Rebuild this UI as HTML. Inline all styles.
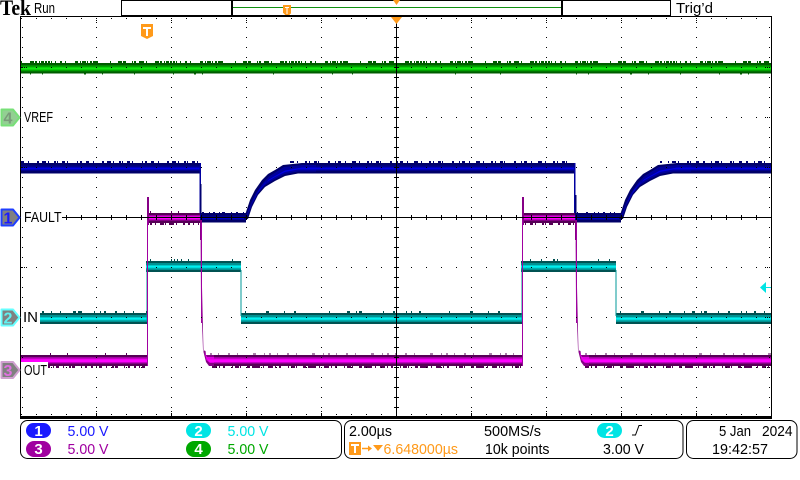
<!DOCTYPE html>
<html><head><meta charset="utf-8"><title>Tek</title>
<style>html,body{margin:0;padding:0;background:#fff}svg{display:block}text{font-family:"Liberation Sans",sans-serif;font-size:15px;fill:#000}</style></head>
<body>
<svg width="800" height="480" viewBox="0 0 800 480" xmlns="http://www.w3.org/2000/svg">
<defs>
<linearGradient id="gG" x1="0" y1="0" x2="0" y2="1"><stop offset=".2" stop-color="#005c00"/><stop offset=".2" stop-color="#008a00"/><stop offset=".35" stop-color="#008a00"/><stop offset=".35" stop-color="#00b800"/><stop offset=".45" stop-color="#00b800"/><stop offset=".45" stop-color="#10e810"/><stop offset=".6" stop-color="#10e810"/><stop offset=".6" stop-color="#00b800"/><stop offset=".7" stop-color="#00b800"/><stop offset=".7" stop-color="#008a00"/><stop offset=".8" stop-color="#008a00"/><stop offset=".8" stop-color="#005c00"/></linearGradient>
<linearGradient id="gC" x1="0" y1="0" x2="0" y2="1"><stop offset=".2" stop-color="#005252"/><stop offset=".2" stop-color="#009090"/><stop offset=".35" stop-color="#009090"/><stop offset=".35" stop-color="#00c8c8"/><stop offset=".45" stop-color="#00c8c8"/><stop offset=".45" stop-color="#00f0f0"/><stop offset=".6" stop-color="#00f0f0"/><stop offset=".6" stop-color="#00c8c8"/><stop offset=".7" stop-color="#00c8c8"/><stop offset=".7" stop-color="#009090"/><stop offset=".8" stop-color="#009090"/><stop offset=".8" stop-color="#005252"/></linearGradient>
<linearGradient id="gM" x1="0" y1="0" x2="0" y2="1"><stop offset=".18" stop-color="#560056"/><stop offset=".18" stop-color="#a000a0"/><stop offset=".32" stop-color="#a000a0"/><stop offset=".32" stop-color="#e000e0"/><stop offset=".4" stop-color="#e000e0"/><stop offset=".4" stop-color="#ff00ff"/><stop offset=".62" stop-color="#ff00ff"/><stop offset=".62" stop-color="#c000c0"/><stop offset=".72" stop-color="#c000c0"/><stop offset=".72" stop-color="#860086"/><stop offset=".82" stop-color="#860086"/><stop offset=".82" stop-color="#560056"/></linearGradient>
<linearGradient id="gB" x1="0" y1="0" x2="0" y2="1"><stop offset=".22" stop-color="#000068"/><stop offset=".22" stop-color="#00008c"/><stop offset=".36" stop-color="#00008c"/><stop offset=".36" stop-color="#0000b8"/><stop offset=".46" stop-color="#0000b8"/><stop offset=".46" stop-color="#0000e4"/><stop offset=".58" stop-color="#0000e4"/><stop offset=".58" stop-color="#0000b8"/><stop offset=".68" stop-color="#0000b8"/><stop offset=".68" stop-color="#00008c"/><stop offset=".78" stop-color="#00008c"/><stop offset=".78" stop-color="#000068"/></linearGradient>
<linearGradient id="gL" x1="0" y1="0" x2="0" y2="1"><stop offset=".25" stop-color="#000068"/><stop offset=".25" stop-color="#00008c"/><stop offset=".4" stop-color="#00008c"/><stop offset=".4" stop-color="#0000c8"/><stop offset=".62" stop-color="#0000c8"/><stop offset=".62" stop-color="#00008c"/><stop offset=".75" stop-color="#00008c"/><stop offset=".75" stop-color="#000068"/></linearGradient>
<g id="rise">
<path d="M245 215L250 200 255 190 262 180 268 174 275 170 283 165 302 163H316V173.500H298L285 176 275 181 265 187 258 195 252 207 248 219 244 219Z" fill="#000068"/>
<path d="M246 216L251 203 256 193 263 183 269 176.500 276 172 284 167 302 165H316V171.500H298L285 174 275 179 265 185 258 193 252 204 247.500 216Z" fill="#00009c"/>
<path d="M248 213L252 204 257 194 263 186 269 179.500 276 175.500 285 170.500 302 167.500H316V169.500H298L285 172 275 177 265 183 259 190 254 199 250 209Z" fill="#0000e4"/>
</g>
</defs>
<rect width="800" height="480" fill="#fff"/>

<!-- Channel 4 -->
<g shape-rendering="crispEdges">
<rect x="21" y="63" width="750" height="10.500" fill="url(#gG)"/>
<line x1="21" x2="771" y1="62" y2="62" stroke="#005c00" stroke-width="2" stroke-dasharray="1 8 4 1 2 2 1 1 3 1 2 1 2 1 1 3 1 4 2 3 1 9 3 2 1 1 4 1 1 2 2 1 5 12 1 7 4 1 3 6 1 1 2 3 5 2"/>
<line x1="30" x2="771" y1="74" y2="74" stroke="#005c00" stroke-width="1.400" stroke-dasharray="1 11 1 41 2 16 1 31 1 38 1 20 2 6 1 70 1 58 1 19 1 102 1 44 1 75"/>
</g>

<!-- Channel 1 -->
<g shape-rendering="crispEdges">
<rect x="21" y="163" width="179" height="10.500" fill="url(#gB)"/>
<line x1="21" x2="199" y1="162" y2="162" stroke="#000070" stroke-width="2" stroke-dasharray="3 4 1 8 2 3 4 2 1 5 2 1 1 4 3 2 1 9 1 2 2 4"/>
<rect x="200" y="213" width="46" height="9.500" fill="url(#gL)"/>
<line x1="202" x2="245" y1="212.500" y2="212.500" stroke="#000070" stroke-dasharray="2 5 1 3 2 4 1 2 3 6 1 4"/>
<rect x="575" y="213" width="46" height="9.500" fill="url(#gL)"/>
<line x1="577" x2="620" y1="212.500" y2="212.500" stroke="#000070" stroke-dasharray="1 8 2 6 1 3 1 4 2 5 1 3"/>
<rect x="199.500" y="163" width="1.500" height="54" fill="#0000a0"/>
<rect x="574" y="163" width="1.500" height="54" fill="#0000a0"/>
<rect x="200" y="184" width="1.500" height="30" fill="#000070"/>
<rect x="575" y="195" width="1.500" height="20" fill="#000070"/>
<rect x="310" y="163" width="264" height="10.500" fill="url(#gB)"/>
<rect x="685" y="163" width="86" height="10.500" fill="url(#gB)"/>
<line x1="290" x2="574" y1="162" y2="162" stroke="#000070" stroke-width="2" stroke-dasharray="4 3 1 7 2 2 1 4 3 1 1 9 2 5 1 2 3 4 1 6"/>
<line x1="660" x2="771" y1="162" y2="162" stroke="#000070" stroke-width="2" stroke-dasharray="2 6 1 3 4 2 1 8 2 1 1 5 3 4"/>
</g>
<use href="#rise"/>
<use href="#rise" x="375"/>

<!-- Channel 2 -->
<g shape-rendering="crispEdges">
<rect x="40" y="313" width="107" height="11" fill="url(#gC)"/>
<rect x="241" y="313" width="281" height="11" fill="url(#gC)"/>
<rect x="616" y="313" width="155" height="11" fill="url(#gC)"/>
<rect x="146" y="261" width="95" height="11" fill="url(#gC)"/>
<rect x="521" y="261" width="95" height="11" fill="url(#gC)"/>
<rect x="146.500" y="270" width="1" height="50" fill="#009a9a"/>
<rect x="240.500" y="270" width="1" height="46" fill="#009a9a"/>
<rect x="521.500" y="270" width="1" height="50" fill="#009a9a"/>
<rect x="615.500" y="270" width="1" height="46" fill="#009a9a"/>
<line x1="42" x2="147" y1="312" y2="312" stroke="#005252" stroke-width="2" stroke-dasharray="2 7 1 8 1 12 3 2 4 12 1 5 1 3 2 9"/>
<line x1="245" x2="520" y1="312" y2="312" stroke="#005252" stroke-width="2" stroke-dasharray="1 20 3 15 1 9 2 33 1 17 3 6 1 2 3 21 1 9 2 11 1 4 1 7 2 28"/>
<line x1="620" x2="771" y1="312" y2="312" stroke="#005252" stroke-width="2" stroke-dasharray="1 20 3 15 1 9 2 13 1 7 3 6 1 2 3 11 1 9 2 11 1 4 1 7 2 8"/>
<line x1="150" x2="240" y1="260" y2="260" stroke="#005252" stroke-width="2" stroke-dasharray="1 20 1 2 1 2 1 3 1 6 1 43"/>
<line x1="530" x2="615" y1="260" y2="260" stroke="#005252" stroke-width="2" stroke-dasharray="1 10 1 11 2 2 1 40"/>
</g>

<!-- Channel 3 -->
<g shape-rendering="crispEdges">
<rect x="21" y="355" width="126" height="11" fill="url(#gM)"/>
<rect x="212" y="355" width="310" height="11" fill="url(#gM)"/>
<rect x="587" y="355" width="184" height="11" fill="url(#gM)"/>
<rect x="148" y="213" width="52" height="10" fill="url(#gM)"/>
<rect x="523" y="213" width="52" height="10" fill="url(#gM)"/>
<rect x="147" y="197" width="2" height="28" fill="#860086"/>
<rect x="522" y="197" width="2" height="28" fill="#860086"/>
<rect x="147" y="220" width="1" height="146" fill="#a000a0"/>
<rect x="522" y="220" width="1" height="146" fill="#a000a0"/>
<rect x="200" y="220" width="2" height="20" fill="#860086"/>
<rect x="575" y="220" width="2" height="20" fill="#860086"/>
<line x1="150" x2="199" y1="224" y2="224" stroke="#560056" stroke-width="2" stroke-dasharray="2 3 1 4 4 1 1 3 5 2 1 6 2 3"/>
<line x1="525" x2="574" y1="224" y2="224" stroke="#560056" stroke-width="2" stroke-dasharray="1 4 3 2 1 6 2 1 1 3 4 5 2 3"/>
<line x1="150" x2="199" y1="212" y2="212" stroke="#560056" stroke-width="2" stroke-dasharray="1 20 1 6 1 21"/>
<line x1="48" x2="147" y1="367" y2="367" stroke="#560056" stroke-width="2" stroke-dasharray="2 3 1 2 3 4 1 5 2 1 3 6 1 3 2 4"/>
<line x1="212" x2="522" y1="367" y2="367" stroke="#560056" stroke-width="2" stroke-dasharray="5 2 1 3 2 7 1 2 4 1 1 6 3 2 8 3 1 4"/>
<line x1="585" x2="771" y1="367" y2="367" stroke="#560056" stroke-width="2" stroke-dasharray="4 2 1 3 2 7 1 2 5 1 1 6 3 3 8 5 1 4"/>
<line x1="210" x2="522" y1="354" y2="354" stroke="#560056" stroke-dasharray="2 6 1 9 2 7 1 15 3 8 1 4"/>
<line x1="585" x2="771" y1="354" y2="354" stroke="#560056" stroke-dasharray="2 8 1 9 2 7 1 15 3 8 1 12"/>
<rect x="50" y="353" width="1" height="2" fill="#560056"/><rect x="67" y="353" width="1" height="2" fill="#560056"/><rect x="105" y="353" width="1" height="2" fill="#560056"/><rect x="126" y="353" width="1" height="2" fill="#560056"/>
</g>
<g id="fall3">
<path d="M200.500 222L201 300 202.500 335 203 350 205.500 351 206 355H214V366H209L206 362 203.500 352Z" fill="#860086"/>
<path d="M204.500 352L207 357H214V363H210L206.500 360Z" fill="#e000e0"/>
<path d="M206 356L208.500 359.500H214V362H209Z" fill="#ff00ff"/>
</g>
<use href="#fall3" x="375"/>
<rect x="201" y="223" width="1" height="100" fill="#a000a0" shape-rendering="crispEdges"/>
<rect x="576" y="223" width="1" height="100" fill="#a000a0" shape-rendering="crispEdges"/>

<!-- Graticule -->
<g shape-rendering="crispEdges" stroke="#000" stroke-width="1" fill="none">
<g stroke-dasharray="1 14">
<path d="M21 18.500H771M21 67.500H771M21 117.500H771M21 167.500H771M21 267.500H771M21 317.500H771M21 367.500H771M21 414.500H771"/>
</g>
<g stroke-dasharray="1 9">
<path d="M22.500 27V417M96.500 27V417M171.500 27V417M246.500 27V417M321.500 27V417M471.500 27V417M546.500 27V417M621.500 27V417M696.500 27V417M769.500 27V417"/>
</g>
<g stroke-dasharray="1 1" >
<path d="M96.500 18V23M171.500 18V23M246.500 18V23M321.500 18V23M396.500 18V23M471.500 18V23M546.500 18V23M621.500 18V23M696.500 18V23"/>
<path d="M96.500 411V416M171.500 411V416M246.500 411V416M321.500 411V416M471.500 411V416M546.500 411V416M621.500 411V416M696.500 411V416"/>
<path d="M22 67.500H27M22 117.500H27M22 167.500H27M22 267.500H27M22 317.500H27M22 367.500H27M765 67.500H771M765 117.500H771M765 167.500H771M765 267.500H771M765 317.500H771M765 367.500H771"/>
</g>
<path d="M21 217.500H771M396.500 17V416"/>
<path stroke-dasharray="1 14" stroke-width="5" d="M21 217.500H771"/>
<path stroke-dasharray="1 9" stroke-width="5" d="M396.500 27V417"/>
</g>

<!-- Label masks + labels -->
<g shape-rendering="crispEdges" fill="#fff">
<rect x="21" y="110" width="33" height="14"/>
<rect x="21" y="210" width="41" height="14"/>
<rect x="21" y="310" width="19" height="14"/>
<rect x="21" y="362" width="27" height="16"/>
</g>
<g>
<text x="24" y="122" textLength="29" lengthAdjust="spacingAndGlyphs">VREF</text>
<text x="24" y="222" textLength="37.500" lengthAdjust="spacingAndGlyphs">FAULT</text>
<text x="23" y="322" textLength="15" lengthAdjust="spacingAndGlyphs">IN</text>
<text x="24" y="375" textLength="23" lengthAdjust="spacingAndGlyphs">OUT</text>
</g>

<!-- Frame -->
<g shape-rendering="crispEdges" fill="#000">
<rect x="20" y="16" width="752" height="1"/>
<rect x="20" y="16" width="1" height="402"/>
<rect x="771" y="16" width="1" height="402"/>
<rect x="20" y="416" width="752" height="3"/>
</g>

<!-- Channel markers -->
<g stroke-width="2" stroke-linejoin="round">
<path d="M1.500 109.500H13L19.500 117.500L13 125.500H1.500Z" fill="#93cf93" stroke="#78e078"/>
<path d="M1.500 209.500H13L19.500 217.500L13 225.500H1.500Z" fill="#808080" stroke="#1f3fff"/>
<path d="M1.500 309.500H13L19.500 317.500L13 325.500H1.500Z" fill="#808080" stroke="#66ffff"/>
<path d="M1.500 362H13L19.500 370L13 378H1.500Z" fill="#808080" stroke="#d0a0d0"/>
</g>
<g text-anchor="middle">
<text x="8" y="123.500" style="fill:#7a9a7a;font-weight:bold;font-size:16px">4</text>
<text x="8" y="223.500" style="fill:#1a1aff;font-weight:bold;font-size:16px">1</text>
<text x="8" y="323.500" style="fill:#60f0f0;font-weight:bold;font-size:16px">2</text>
<text x="8" y="376" style="fill:#e070e0;font-weight:bold;font-size:16px">3</text>
</g>

<!-- Top bar -->
<text x="0" y="15" textLength="31" lengthAdjust="spacingAndGlyphs" style="font-family:'Liberation Serif',serif;font-weight:bold;font-size:22px">Tek</text>
<text x="34" y="13" textLength="21" lengthAdjust="spacingAndGlyphs">Run</text>
<text x="676" y="13" textLength="37" lengthAdjust="spacingAndGlyphs">Trig’d</text>
<g shape-rendering="crispEdges" fill="#000">
<rect x="121" y="0" width="550" height="1"/>
<rect x="121" y="15" width="550" height="1"/>
<rect x="121" y="0" width="1" height="16"/>
<rect x="670" y="0" width="1" height="16"/>
<rect x="231" y="0" width="2" height="16"/>
<rect x="561" y="0" width="2" height="16"/>
<rect x="233" y="7" width="328" height="1" fill="#109010"/>
</g>
<path d="M283 5H291V13L289 15H285L283 13Z" fill="#ff9a1a" shape-rendering="crispEdges"/>
<path d="M285 7H289V8H287.500V14H286.500V8H285Z" fill="#fff" shape-rendering="crispEdges"/>
<path d="M393 0H400L396.500 5Z" fill="#ff9a1a"/>
<path d="M391 17H402L396.500 24Z" fill="#ff9a1a"/>
<path d="M141 24H153V36L147 39L141 36Z" fill="#ff9a1a"/>
<path d="M143 27H151V29H148V36H146V29H143Z" fill="#fff" shape-rendering="crispEdges"/>

<!-- Cyan trigger arrow -->
<path d="M760 287.500L766 282V293Z" fill="#00e4e4"/>
<rect x="765" y="287" width="6" height="1" fill="#00e4e4" shape-rendering="crispEdges"/>

<!-- Bottom boxes -->
<g fill="none" stroke="#000" stroke-width="1">
<rect x="20.500" y="420.500" width="321" height="38" rx="7"/>
<rect x="344.500" y="420.500" width="338.500" height="38" rx="7"/>
<rect x="686.500" y="420.500" width="110.500" height="38" rx="7"/>
</g>
<g>
<rect x="26" y="423" width="25" height="15" rx="7.500" fill="#1a1aff"/>
<rect x="26" y="441" width="25" height="16" rx="8" fill="#a000a0"/>
<rect x="186" y="423" width="25" height="15" rx="7.500" fill="#00e4e4"/>
<rect x="186" y="441" width="25" height="16" rx="8" fill="#00a800"/>
<rect x="597" y="423" width="25" height="15" rx="7.500" fill="#00e4e4"/>
</g>
<g text-anchor="middle">
<text x="38.500" y="436" style="fill:#fff;font-weight:bold">1</text>
<text x="38.500" y="454" style="fill:#fff;font-weight:bold">3</text>
<text x="198.500" y="436" style="fill:#fff;font-weight:bold">2</text>
<text x="198.500" y="454" style="fill:#fff;font-weight:bold">4</text>
<text x="609.500" y="436" style="fill:#fff;font-weight:bold">2</text>
</g>
<text x="67.500" y="436" textLength="41" lengthAdjust="spacingAndGlyphs" style="fill:#1a1aff">5.00 V</text>
<text x="67.500" y="454" textLength="41" lengthAdjust="spacingAndGlyphs" style="fill:#a000a0">5.00 V</text>
<text x="227.500" y="436" textLength="41" lengthAdjust="spacingAndGlyphs" style="fill:#00e4e4">5.00 V</text>
<text x="227.500" y="454" textLength="41" lengthAdjust="spacingAndGlyphs" style="fill:#00a800">5.00 V</text>

<text x="349" y="436" textLength="43" lengthAdjust="spacingAndGlyphs">2.00µs</text>
<text x="484" y="436" textLength="57" lengthAdjust="spacingAndGlyphs">500MS/s</text>
<text x="485" y="454" textLength="64.500" lengthAdjust="spacingAndGlyphs">10k points</text>
<text x="603" y="454" textLength="41" lengthAdjust="spacingAndGlyphs">3.00 V</text>
<path d="M632 435H635.500L639 425.500H642" fill="none" stroke="#000" stroke-width="1"/>

<path d="M349 442H361V455H349Z" fill="#ff9a1a" shape-rendering="crispEdges"/>
<path d="M351 444H359V446H356V453H354V446H351Z" fill="#fff" shape-rendering="crispEdges"/>
<path d="M362 448.500H369" stroke="#ff9a1a" stroke-width="1.500"/>
<path d="M368 445.500L372 448.500L368 451.500Z" fill="#ff9a1a"/>
<path d="M373 445H383L378 451Z" fill="#ff9a1a"/>
<text x="383.500" y="454" textLength="74.500" lengthAdjust="spacingAndGlyphs" style="fill:#ff9a1a">6.648000µs</text>

<text x="719" y="436" textLength="32" lengthAdjust="spacingAndGlyphs">5 Jan</text>
<text x="762" y="436" textLength="30.500" lengthAdjust="spacingAndGlyphs">2024</text>
<text x="712" y="454" textLength="56" lengthAdjust="spacingAndGlyphs">19:42:57</text>
</svg>
</body></html>
